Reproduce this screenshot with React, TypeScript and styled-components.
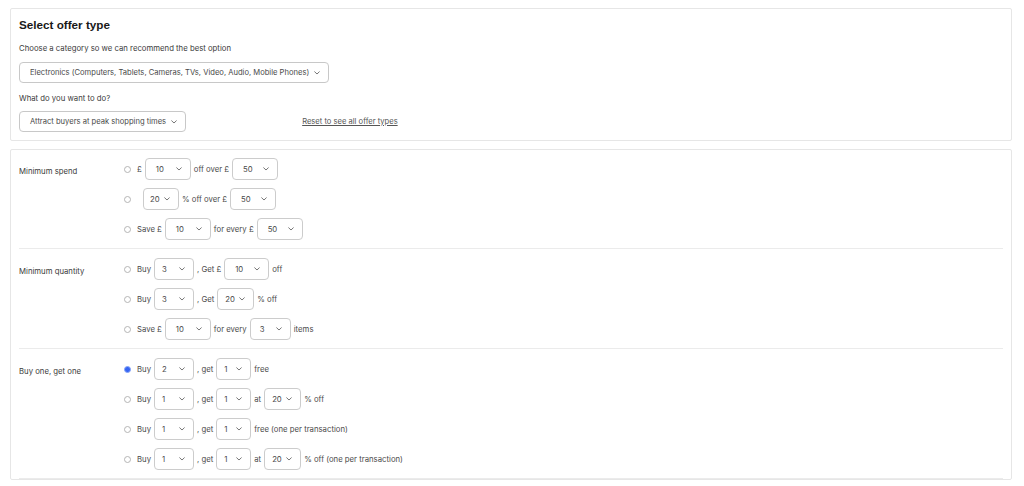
import React from 'react';
import styled, {createGlobalStyle} from 'styled-components';

const GlobalStyle = createGlobalStyle`
  body {
    margin: 0;
    background: #ffffff;
    font-family: Inter, "Liberation Sans", sans-serif;
    color: #3a3a3a;
  }
`;

type Part = string | {value: string; w: number; pl?: number};

type Option = {
  checked?: boolean;
  lead?: number;
  parts: Part[];
};

type Group = {
  label: string;
  options: Option[];
};

const groups: Group[] = [
  {
    label: 'Minimum spend',
    options: [
      {parts: ['£', {value: '10', w: 46}, 'off over £', {value: '50', w: 46}]},
      {lead: 3, parts: [{value: '20', w: 36, pl: 6}, '% off over £', {value: '50', w: 46}]},
      {parts: ['Save £', {value: '10', w: 46}, 'for every £', {value: '50', w: 46}]},
    ],
  },
  {
    label: 'Minimum quantity',
    options: [
      {parts: ['Buy', {value: '3', w: 40, pl: 7}, ', Get £', {value: '10', w: 45}, 'off']},
      {parts: ['Buy', {value: '3', w: 40, pl: 7}, ', Get', {value: '20', w: 37, pl: 7}, '% off']},
      {parts: ['Save £', {value: '10', w: 46}, 'for every', {value: '3', w: 41, pl: 9}, 'items']},
    ],
  },
  {
    label: 'Buy one, get one',
    options: [
      {checked: true, parts: ['Buy', {value: '2', w: 40, pl: 7}, ', get', {value: '1', w: 35, pl: 7}, 'free']},
      {parts: ['Buy', {value: '1', w: 40, pl: 7}, ', get', {value: '1', w: 35, pl: 7}, 'at', {value: '20', w: 37, pl: 7}, '% off']},
      {parts: ['Buy', {value: '1', w: 40, pl: 7}, ', get', {value: '1', w: 35, pl: 7}, 'free (one per transaction)']},
      {parts: ['Buy', {value: '1', w: 40, pl: 7}, ', get', {value: '1', w: 35, pl: 7}, 'at', {value: '20', w: 37, pl: 7}, '% off (one per transaction)']},
    ],
  },
];

const Chevron = () => (
  <svg width="6" height="4" viewBox="0 0 6 4">
    <polyline points="0.7,0.8 3,3 5.3,0.8" fill="none" stroke="#666" strokeWidth="0.9" strokeLinecap="round"/>
  </svg>
);

export default function App() {
  return (
    <>
      <GlobalStyle/>
      <Page>
        <Card>
          <Title>Select offer type</Title>
          <Hint>Choose a category so we can recommend the best option</Hint>
          <Dropdown>
            Electronics (Computers, Tablets, Cameras, TVs, Video, Audio, Mobile Phones)
            <Chevron/>
          </Dropdown>
          <Hint>What do you want to do?</Hint>
          <ActionRow>
            <Dropdown>
              Attract buyers at peak shopping times
              <Chevron/>
            </Dropdown>
            <ResetLink href="#">Reset to see all offer types</ResetLink>
          </ActionRow>
        </Card>

        <OffersCard>
          {groups.map((group) => (
            <GroupRow key={group.label}>
              <GroupLabel>{group.label}</GroupLabel>
              <Options>
                {group.options.map((option, i) => (
                  <OptionRow key={i}>
                    <Radio checked={!!option.checked}/>
                    {option.lead ? <span style={{width: option.lead}}/> : null}
                    {option.parts.map((part, j) =>
                      typeof part === 'string' ? (
                        <Words key={j}>{part}</Words>
                      ) : (
                        <SmallSelect key={j} style={{width: part.w, paddingLeft: part.pl ?? 10}}>
                          {part.value}
                          <Chevron/>
                        </SmallSelect>
                      )
                    )}
                  </OptionRow>
                ))}
              </Options>
            </GroupRow>
          ))}
        </OffersCard>
      </Page>
    </>
  );
}

const Page = styled.div`
  display: flex;
  flex-direction: column;
  gap: 8px;
  padding: 8px 12px 0 10px;
`;

const Card = styled.div`
  display: flex;
  flex-direction: column;
  align-items: flex-start;
  border: 1px solid #e6e6e6;
  border-radius: 2px;
  background: #ffffff;
  padding: 8px;
`;

const Title = styled.h2`
  margin: 0;
  font-family: "Liberation Sans", Arial, sans-serif;
  font-size: 11.7px;
  line-height: 16px;
  font-weight: 700;
  color: #191919;
`;

const Hint = styled.div`
  font-size: 7.75px;
  line-height: 12px;
  color: #3a3a3a;
  margin-top: 9px;
  margin-bottom: 8px;
`;

const Dropdown = styled.div`
  display: flex;
  align-items: center;
  gap: 5px;
  height: 21px;
  box-sizing: border-box;
  padding: 0 8px 0 10px;
  border: 1px solid #c8c8c8;
  border-radius: 4px;
  font-size: 7.6px;
  color: #4a4a4a;
  white-space: nowrap;
`;

const ActionRow = styled.div`
  display: flex;
  align-items: center;
  gap: 116px;
  margin-top: -1px;
`;

const ResetLink = styled.a`
  font-size: 7.6px;
  color: #555555;
  text-decoration: underline;
`;

const OffersCard = styled.div`
  border: 1px solid #e6e6e6;
  border-radius: 2px;
  background: #ffffff;
  padding: 0 8px;
`;

const GroupRow = styled.div`
  display: grid;
  grid-template-columns: 105px 1fr;
  padding: 8px 0 8px;
  border-bottom: 1px solid #ebebeb;

  & + & {
    padding-top: 9px;
  }
`;

const GroupLabel = styled.div`
  font-size: 7.75px;
  line-height: 12px;
  padding-top: 7px;
  color: #3a3a3a;
`;

const Options = styled.div`
  display: flex;
  flex-direction: column;
  gap: 8px;
`;

const OptionRow = styled.div`
  display: flex;
  align-items: center;
  gap: 3px;
  height: 22px;
`;

const Radio = styled.span<{checked: boolean}>`
  width: 7px;
  height: 7px;
  box-sizing: border-box;
  border-radius: 50%;
  margin-right: 3px;
  border: 1px solid ${(p) => (p.checked ? '#8aa7f7' : '#b5b5b5')};
  background: ${(p) => (p.checked ? '#3665f3' : '#ffffff')};
`;

const Words = styled.span`
  font-size: 7.75px;
  color: #4a4a4a;
  white-space: nowrap;
`;

const SmallSelect = styled.div`
  display: flex;
  align-items: center;
  justify-content: space-between;
  height: 22px;
  box-sizing: border-box;
  padding-right: 8px;
  border: 1px solid #cccccc;
  border-radius: 4px;
  font-size: 7.75px;
  color: #4a4a4a;
`;
